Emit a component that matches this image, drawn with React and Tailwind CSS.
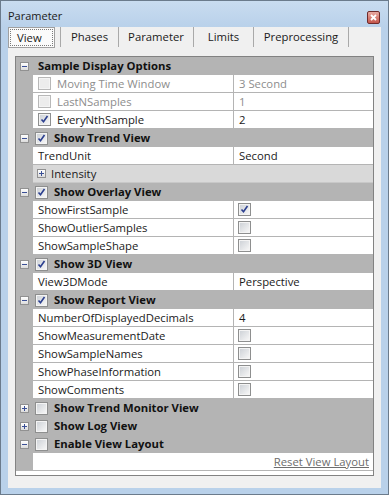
import React from "react";

const font = { fontFamily: '"Open Sans", "Noto Sans", sans-serif' };

const CheckBox = ({ checked, disabled }) => (
  <div
    className={`w-[13px] h-[13px] shrink-0 border flex items-center justify-center ${
      disabled ? "border-[#b8b8b8]" : "border-[#8e8f8f]"
    }`}
  >
    <div
      className={`w-[11px] h-[11px] border flex items-center justify-center ${
        disabled
          ? "border-[#f4f4f4] bg-[#ececec]"
          : "border-[#f4f4f4] bg-gradient-to-br from-[#cfd3d8] to-[#f6f6f6]"
      }`}
    >
      {checked && (
        <svg width="9" height="9" viewBox="0 0 9 9">
          <path d="M1.5 4.5 L3.5 6.8 L7.5 1" fill="none" stroke="#2b3f8f" strokeWidth="1.6" />
        </svg>
      )}
    </div>
  </div>
);

const Expander = ({ open }) => (
  <div className="w-[9px] h-[9px] shrink-0 border border-[#919191] bg-gradient-to-b from-white to-[#dcdcdc] relative">
    <div className="absolute left-[1px] top-[3px] w-[5px] h-[1px] bg-[#3a4f96]" />
    {!open && <div className="absolute left-[3px] top-[1px] w-[1px] h-[5px] bg-[#3a4f96]" />}
  </div>
);

const CatRow = ({ label, checked, open = true, noCheck }) => (
  <div className="h-[18px] flex items-center bg-[#b4b4b4]">
    <div className="w-[17px] flex justify-center">
      <Expander open={open} />
    </div>
    {noCheck ? (
      <span className="ml-[5px] font-bold text-[#111]">{label}</span>
    ) : (
      <>
        <div className="ml-[2px]">
          <CheckBox checked={checked} />
        </div>
        <span className="ml-[6px] font-bold text-[#111]">{label}</span>
      </>
    )}
  </div>
);

const PropRow = ({ label, value, disabled, check, checkValue, checkChecked }) => (
  <div className="h-[18px] flex bg-[#b4b4b4]">
    <div className="w-[17px]" />
    <div className="flex-1 flex bg-white border-b border-[#b4b4b4]">
      <div className="w-[201px] border-r border-[#b4b4b4] flex items-center pl-[5px]">
        {check !== undefined && (
          <div className="mr-[6px]">
            <CheckBox checked={check} disabled={disabled} />
          </div>
        )}
        <span className={disabled ? "text-[#8d8d8d]" : "text-[#1a1a1a]"}>{label}</span>
      </div>
      <div className="flex-1 flex items-center pl-[4px]">
        {checkValue ? (
          <CheckBox checked={checkChecked} />
        ) : (
          <span className={`pl-[1px] ${disabled ? "text-[#8d8d8d]" : "text-[#1a1a1a]"}`}>{value}</span>
        )}
      </div>
    </div>
  </div>
);

const tabs = [
  { name: "Phases", w: "w-[58px]" },
  { name: "Parameter", w: "w-[75px]" },
  { name: "Limits", w: "w-[60px]" },
  { name: "Preprocessing", w: "w-[95px]" },
];

export default function App() {
  return (
    <div
      className="w-[389px] h-[495px] bg-[#b9d1ea] border border-[#6b7b8c] text-[11.3px] leading-none"
      style={font}
    >
      {/* title bar */}
      <div className="h-[26px] flex items-center justify-between pl-[7px] pr-[8px] bg-gradient-to-b from-[#c9dcf0] to-[#b9d1ea]">
        <span className="text-[11px] text-[#1b1b1b] mt-[3px]">Parameter</span>
        <div className="w-[13px] h-[13px] mt-[6px] rounded-[2px] border border-[#6f2b2b] bg-gradient-to-b from-[#e8aaa2] to-[#c4554b] flex items-center justify-center">
          <svg width="7" height="7" viewBox="0 0 7 7">
            <path d="M1 1 L6 6 M6 1 L1 6" stroke="white" strokeWidth="1.8" />
          </svg>
        </div>
      </div>

      {/* client */}
      <div className="mx-[7px] h-[461px] bg-[#f0f0f0]">
        {/* tabs */}
        <div className="h-[20px] flex text-[11.3px] text-[#1a1a1a]">
          <div className="w-[53px] border-r border-[#a9a9a9] flex">
            <div className="w-[47px] h-[21px] bg-[#fbfbfb] border border-[#a0a0a0] p-[1px]">
              <div className="w-full h-full border border-dotted border-[#7a7a7a] flex items-center pl-[6px]">
                View
              </div>
            </div>
          </div>
          {tabs.map((t) => (
            <div key={t.name} className={`${t.w} border-r border-[#a9a9a9] flex items-center justify-center`}>
              {t.name}
            </div>
          ))}
        </div>

        {/* property grid */}
        <div className="ml-[7px] mt-[9px] w-[359px] border border-[#828282] bg-white">
          <CatRow label="Sample Display Options" noCheck />
          <PropRow label="Moving Time Window" value="3 Second" disabled check={false} />
          <PropRow label="LastNSamples" value="1" disabled check={false} />
          <PropRow label="EveryNthSample" value="2" check={true} />
          <CatRow label="Show Trend View" checked />
          <PropRow label="TrendUnit" value="Second" />
          <div className="h-[18px] flex bg-[#b4b4b4]">
            <div className="w-[17px]" />
            <div className="flex-1 flex items-center bg-[#d9d9d9] border-b border-[#c8c8c8] pl-[4px]">
              <Expander open={false} />
              <span className="ml-[5px] text-[#1a1a1a]">Intensity</span>
            </div>
          </div>
          <CatRow label="Show Overlay View" checked />
          <PropRow label="ShowFirstSample" checkValue checkChecked />
          <PropRow label="ShowOutlierSamples" checkValue />
          <PropRow label="ShowSampleShape" checkValue />
          <CatRow label="Show 3D View" checked />
          <PropRow label="View3DMode" value="Perspective" />
          <CatRow label="Show Report View" checked />
          <PropRow label="NumberOfDisplayedDecimals" value="4" />
          <PropRow label="ShowMeasurementDate" checkValue />
          <PropRow label="ShowSampleNames" checkValue />
          <PropRow label="ShowPhaseInformation" checkValue />
          <PropRow label="ShowComments" checkValue />
          <CatRow label="Show Trend Monitor View" open={false} />
          <CatRow label="Show Log View" open={false} />
          <CatRow label="Enable View Layout" />
          <div className="h-[18px] flex bg-[#b4b4b4] border-b border-[#b4b4b4]">
            <div className="w-[17px]" />
            <div className="flex-1 bg-white flex items-center justify-end pr-[4px]">
              <a className="text-[#6d6d6d] underline">Reset View Layout</a>
            </div>
          </div>
          <div className="h-[4px] bg-white" />
        </div>
      </div>
    </div>
  );
}
